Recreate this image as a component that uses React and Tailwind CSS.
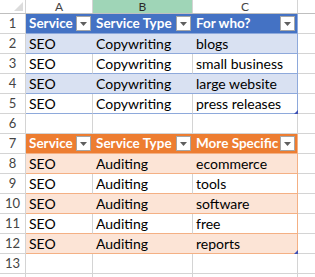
import React from 'react';

const cols = [
  { key: 'A', w: 'w-[67px]' },
  { key: 'B', w: 'w-[100px]' },
  { key: 'C', w: 'w-[105px]' },
];

const blueRows = [
  ['SEO', 'Copywriting', 'blogs'],
  ['SEO', 'Copywriting', 'small business'],
  ['SEO', 'Copywriting', 'large website'],
  ['SEO', 'Copywriting', 'press releases'],
];

const orangeRows = [
  ['SEO', 'Auditing', 'ecommerce'],
  ['SEO', 'Auditing', 'tools'],
  ['SEO', 'Auditing', 'software'],
  ['SEO', 'Auditing', 'free'],
  ['SEO', 'Auditing', 'reports'],
];

const themes = {
  blue: { head: 'bg-[#4472c4]', band: 'bg-[#d9e1f2]', line: 'border-b-[#8ea9db]', edge: 'border-r-[#8ea9db]' },
  orange: { head: 'bg-[#ed7d31]', band: 'bg-[#fce4d6]', line: 'border-b-[#f4b084]', edge: 'border-r-[#f4b084]' },
};

const Drop = () => (
  <span className="absolute right-[2px] top-[2px] w-[15px] h-[15px] bg-white border border-[#a6a6a6] flex items-center justify-center">
    <svg width="7" height="4" viewBox="0 0 7 4"><path d="M0 0h7L3.5 4z" fill="#5f5f5f" /></svg>
  </span>
);

const RowNum = ({ n }) => (
  <div className="w-[26px] h-full shrink-0 border-r border-b border-[#d4d4d4] flex items-center justify-center text-[13px] text-[#444]">{n}</div>
);

const HeaderRow = ({ n, labels, theme }) => (
  <div className="flex h-[20px]">
    <RowNum n={n} />
    {labels.map((l, i) => (
      <div key={i} className={`${cols[i].w} relative h-full shrink-0 ${theme.head} border-b ${theme.line} ${i === 2 ? `border-r ${theme.edge}` : ''} pl-[3px] text-white font-bold text-[13.5px] leading-[19px] overflow-hidden whitespace-nowrap`}>
        {l}
        <Drop />
      </div>
    ))}
    <div className="flex-1 h-full border-b border-[#d4d4d4]" />
  </div>
);

const BodyRow = ({ n, cells, theme, band, last }) => (
  <div className="flex h-[20px]">
    <RowNum n={n} />
    {cells.map((c, i) => (
      <div key={i} className={`${cols[i].w} relative h-full shrink-0 border-b ${theme.line} ${band ? theme.band : `bg-white ${i < 2 ? 'border-r border-r-[#d4d4d4]' : ''}`} ${i === 2 ? `border-r ${theme.edge}` : ''} pl-[3px] text-black text-[14px] leading-[19px] whitespace-nowrap`}>
        {c}
        {last && i === 2 && <span className="absolute right-[-1px] bottom-[-1px] w-[4px] h-[4px] bg-[#3f51b5]" style={{ clipPath: 'polygon(100% 0, 100% 100%, 0 100%)' }} />}
      </div>
    ))}
    <div className="flex-1 h-full border-b border-[#d4d4d4]" />
  </div>
);

const EmptyRow = ({ n }) => (
  <div className="flex h-[20px]">
    <RowNum n={n} />
    {cols.map((c) => (
      <div key={c.key} className={`${c.w} h-full shrink-0 border-r border-b border-[#d4d4d4] bg-white`} />
    ))}
    <div className="flex-1 h-full border-b border-[#d4d4d4]" />
  </div>
);

export default function App() {
  return (
    <div className="w-[315px] h-[277px] overflow-hidden bg-white font-['Lato','Noto_Sans',sans-serif]">
      <div className="flex h-[14px] border-b border-[#bfbfbf]">
        <div className="w-[26px] h-full shrink-0 border-r border-[#d4d4d4] relative">
          <svg className="absolute right-[2px] bottom-[2px]" width="9" height="9" viewBox="0 0 9 9"><path d="M9 0v9H0z" fill="#dcdcdc" /></svg>
        </div>
        <div className="w-[67px] h-full shrink-0 border-r border-[#d4d4d4] text-center text-[12px] text-[#444] leading-[13px]">A</div>
        <div className="w-[100px] h-full shrink-0 border-r border-[#d4d4d4] bg-[#9fd5b7] text-center text-[12px] text-[#2a2a2a] leading-[13px]">B</div>
        <div className="w-[105px] h-full shrink-0 border-r border-[#d4d4d4] text-center text-[12px] text-[#444] leading-[13px]">C</div>
        <div className="flex-1" />
      </div>
      <HeaderRow n={1} labels={['Service', 'Service Type', 'For who?']} theme={themes.blue} />
      {blueRows.map((r, i) => (
        <BodyRow key={i} n={i + 2} cells={r} theme={themes.blue} band={i % 2 === 0} last={i === blueRows.length - 1} />
      ))}
      <EmptyRow n={6} />
      <HeaderRow n={7} labels={['Service', 'Service Type', 'More Specific']} theme={themes.orange} />
      {orangeRows.map((r, i) => (
        <BodyRow key={i} n={i + 8} cells={r} theme={themes.orange} band={i % 2 === 0} last={i === orangeRows.length - 1} />
      ))}
      <EmptyRow n={13} />
      <EmptyRow n="" />
    </div>
  );
}
